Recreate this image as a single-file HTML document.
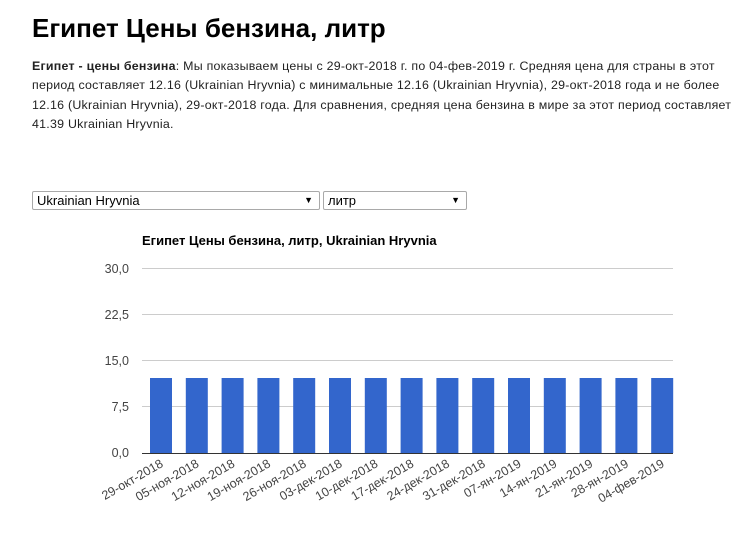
<!DOCTYPE html>
<html><head><meta charset="utf-8"><style>
body{margin:0;background:#fff;font-family:"Liberation Sans",Arial,sans-serif;color:#000;width:747px;height:540px;overflow:hidden;position:relative}
h1{position:absolute;left:32px;top:13px;margin:0;font-size:26px;font-weight:bold;white-space:nowrap}
p{position:absolute;left:32px;top:57px;margin:0;font-size:12.4px;line-height:19.4px;white-space:nowrap;color:#222;letter-spacing:0.25px}
.sel{position:absolute;top:191px;border:1px solid #a9a9a9;border-radius:2px;font-size:13px;line-height:17px;padding-left:4px;box-sizing:border-box;height:19px}
.sel span{position:absolute;right:6px;top:0;font-size:9px}
</style></head><body>
<h1>Египет Цены бензина, литр</h1>
<p><b>Египет - цены бензина</b>: Мы показываем цены с 29-окт-2018 г. по 04-фев-2019 г. Средняя цена для страны в этот<br>период составляет 12.16 (Ukrainian Hryvnia) с минимальные 12.16 (Ukrainian Hryvnia), 29-окт-2018 года и не более<br>12.16 (Ukrainian Hryvnia), 29-окт-2018 года. Для сравнения, средняя цена бензина в мире за этот период составляет<br>41.39 Ukrainian Hryvnia.</p>
<div class="sel" style="left:32px;width:288px">Ukrainian Hryvnia<span>▼</span></div>
<div class="sel" style="left:323px;width:144px">литр<span>▼</span></div>
<svg width="747" height="540" style="position:absolute;left:0;top:0" font-family="Liberation Sans, Arial, sans-serif">
<text x="142" y="245" font-size="13" font-weight="bold" fill="#000">Египет Цены бензина, литр, Ukrainian Hryvnia</text>
<g stroke="#ccc" stroke-width="1">
<line x1="142" x2="673" y1="268.5" y2="268.5"/><line x1="142" x2="673" y1="314.5" y2="314.5"/><line x1="142" x2="673" y1="360.5" y2="360.5"/><line x1="142" x2="673" y1="406.5" y2="406.5"/>
</g>
<g font-size="12.5" fill="#444" text-anchor="end">
<text x="129" y="273">30,0</text><text x="129" y="319">22,5</text><text x="129" y="365">15,0</text><text x="129" y="411">7,5</text><text x="129" y="457">0,0</text>
</g>
<g fill="#3366cc">
<rect x="150" y="378" width="22" height="75"/><rect x="185.8" y="378" width="22" height="75"/><rect x="221.6" y="378" width="22" height="75"/><rect x="257.4" y="378" width="22" height="75"/><rect x="293.2" y="378" width="22" height="75"/><rect x="329" y="378" width="22" height="75"/><rect x="364.8" y="378" width="22" height="75"/><rect x="400.6" y="378" width="22" height="75"/><rect x="436.4" y="378" width="22" height="75"/><rect x="472.2" y="378" width="22" height="75"/><rect x="508" y="378" width="22" height="75"/><rect x="543.8" y="378" width="22" height="75"/><rect x="579.6" y="378" width="22" height="75"/><rect x="615.4" y="378" width="22" height="75"/><rect x="651.2" y="378" width="22" height="75"/>
</g>
<line x1="142" x2="673" y1="453.5" y2="453.5" stroke="#333" stroke-width="1"/>
<g font-size="12.5" fill="#444" text-anchor="end">
<text transform="translate(164,466) rotate(-30)">29-окт-2018</text>
<text transform="translate(199.8,466) rotate(-30)">05-ноя-2018</text>
<text transform="translate(235.6,466) rotate(-30)">12-ноя-2018</text>
<text transform="translate(271.4,466) rotate(-30)">19-ноя-2018</text>
<text transform="translate(307.2,466) rotate(-30)">26-ноя-2018</text>
<text transform="translate(343,466) rotate(-30)">03-дек-2018</text>
<text transform="translate(378.8,466) rotate(-30)">10-дек-2018</text>
<text transform="translate(414.6,466) rotate(-30)">17-дек-2018</text>
<text transform="translate(450.4,466) rotate(-30)">24-дек-2018</text>
<text transform="translate(486.2,466) rotate(-30)">31-дек-2018</text>
<text transform="translate(522,466) rotate(-30)">07-ян-2019</text>
<text transform="translate(557.8,466) rotate(-30)">14-ян-2019</text>
<text transform="translate(593.6,466) rotate(-30)">21-ян-2019</text>
<text transform="translate(629.4,466) rotate(-30)">28-ян-2019</text>
<text transform="translate(665.2,466) rotate(-30)">04-фев-2019</text>
</g>
</svg>
</body></html>
